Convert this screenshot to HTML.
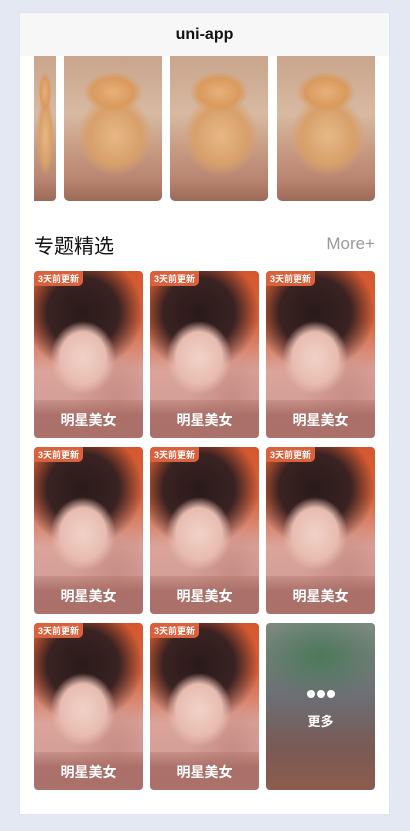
<!DOCTYPE html>
<html><head><meta charset="utf-8"><style>
*{margin:0;padding:0;box-sizing:border-box}
body{width:410px;height:831px;background:#e3e8f3;font-family:"Liberation Sans","Noto Sans CJK SC",sans-serif;position:relative;overflow:hidden}
.frame{position:absolute;left:19px;top:12px;width:371px;height:803px;background:#fff;border:1px solid #e0e3ea}
.hdr{position:absolute;left:0;top:0;width:100%;height:43px;background:#f7f7f7;text-align:center;line-height:43px;font-weight:bold;font-size:16px;color:#111}
.cat{position:absolute;top:43px;height:145px;border-radius:0 0 5px 5px;overflow:hidden;
background:
radial-gradient(ellipse 30% 14% at 50% 25%,#e8b07a 0,#d99a5e 70%,transparent 100%),
radial-gradient(ellipse 38% 28% at 52% 55%,#e6b885 0,#d8a06a 70%,transparent 100%),
linear-gradient(180deg,#c9a58c 0,#d8b9a2 40%,#c79a82 65%,#b98570 85%,#9c6a58 100%)}
.ttl{position:absolute;left:14px;top:217px;font-size:20px;color:#111}
.more{position:absolute;right:14px;top:221px;font-size:17px;color:#999}
.card{position:absolute;width:109px;height:167px;border-radius:4px;overflow:hidden;
background:
radial-gradient(ellipse 30% 22% at 45% 52%,#f1d2c8 0,#e8bcb0 70%,transparent 100%),
radial-gradient(ellipse 55% 35% at 45% 25%,#2a1a1a 0,#3a2222 60%,transparent 100%),
radial-gradient(ellipse 40% 30% at 75% 75%,#c78d86 0,transparent 100%),
linear-gradient(180deg,#d4582e 0,#d8613a 30%,#dba49a 60%,#c99a94 100%)}
.card .tag{position:absolute;left:0;top:0;background:#d9613c;color:#fff;font-size:9px;font-weight:bold;padding:1px 4px;border-radius:0 0 5px 0}
.card .lbl{position:absolute;left:0;bottom:0;width:100%;height:38px;background:linear-gradient(180deg,rgba(170,110,100,.3),rgba(165,105,98,.85) 40%);color:#fff;font-weight:bold;font-size:14px;text-align:center;line-height:40px}
.moreCard{background:radial-gradient(ellipse 60% 25% at 50% 20%,#4a7a5a,transparent),linear-gradient(180deg,#7b8a80 0,#6c6e73 45%,#7a5a55 75%,#8c5c4c 100%)}
.dots{position:absolute;left:0;width:100%;top:64px;text-align:center;color:#fff;font-size:12px;letter-spacing:1px}
.dots span{display:inline-block;width:8px;height:8px;border-radius:50%;background:#fff;margin:0 1px}
.mtx{position:absolute;left:0;width:100%;top:88px;text-align:center;color:#fff;font-weight:bold;font-size:13px}
</style></head><body>
<div class="frame">
<div class="hdr">uni-app</div>
<div class="cat" style="left:14px;width:22px;border-radius:0 0 4px 0;background-position:right"></div>
<div class="cat" style="left:44px;width:98px"></div>
<div class="cat" style="left:150px;width:98px"></div>
<div class="cat" style="left:257px;width:98px"></div>
<div class="ttl">专题精选</div>
<div class="more">More+</div>

<div class="card" style="left:14px;top:258px"><div class="tag">3天前更新</div><div class="lbl">明星美女</div></div>
<div class="card" style="left:130px;top:258px"><div class="tag">3天前更新</div><div class="lbl">明星美女</div></div>
<div class="card" style="left:246px;top:258px"><div class="tag">3天前更新</div><div class="lbl">明星美女</div></div>
<div class="card" style="left:14px;top:434px"><div class="tag">3天前更新</div><div class="lbl">明星美女</div></div>
<div class="card" style="left:130px;top:434px"><div class="tag">3天前更新</div><div class="lbl">明星美女</div></div>
<div class="card" style="left:246px;top:434px"><div class="tag">3天前更新</div><div class="lbl">明星美女</div></div>
<div class="card" style="left:14px;top:610px"><div class="tag">3天前更新</div><div class="lbl">明星美女</div></div>
<div class="card" style="left:130px;top:610px"><div class="tag">3天前更新</div><div class="lbl">明星美女</div></div>
<div class="card moreCard" style="left:246px;top:610px"><div class="dots"><span></span><span></span><span></span></div><div class="mtx">更多</div></div>
</div>
</body></html>
